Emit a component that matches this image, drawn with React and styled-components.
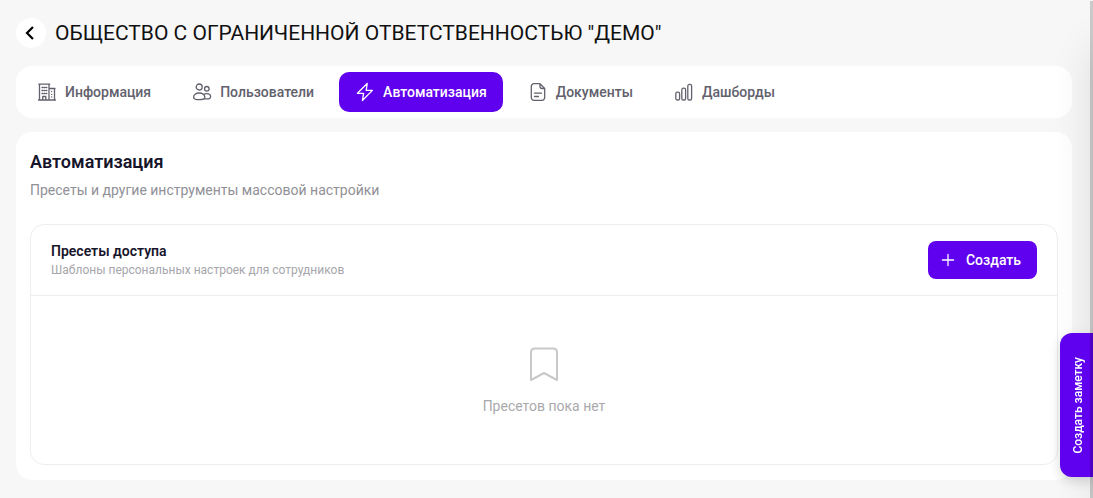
import React from 'react';
import styled, { createGlobalStyle } from 'styled-components';

const violet = '#5f00ee';
const ink = '#17152b';
const slate = '#62616d';
const line = '#eeeef0';

const GlobalStyle = createGlobalStyle`
  *, *::before, *::after {
    box-sizing: border-box;
  }

  body {
    margin: 0;
    background: #f7f7f7;
    color: ${ink};
    font-family: Roboto, Inter, "Liberation Sans", sans-serif;
    font-size: 14px;
    overflow-x: hidden;
  }

  h1, h2, h3, p {
    margin: 0;
  }

  button {
    font-family: inherit;
    border: 0;
    cursor: pointer;
  }
`;

const Page = styled.div`
  padding: 18px 21px 18px 16px;
`;

const Header = styled.header`
  display: flex;
  align-items: center;
  gap: 9px;
  margin-bottom: 18px;
`;

const BackButton = styled.button`
  display: flex;
  align-items: center;
  justify-content: center;
  width: 30px;
  height: 30px;
  padding: 0 2px 0 0;
  border-radius: 50%;
  background: white;
  color: black;
`;

const Title = styled.h1`
  color: #111;
  font-size: 21px;
  font-weight: 400;
  line-height: 30px;
`;

const Tabs = styled.nav`
  display: flex;
  gap: 9px;
  margin-bottom: 14px;
  padding: 6px 5px;
  border-radius: 16px;
  background: white;
`;

const Tab = styled.a`
  display: flex;
  align-items: center;
  gap: 8px;
  height: 40px;
  padding: 0 16px;
  border-radius: 10px;
  background: ${p => (p.$active ? violet : 'transparent')};
  color: ${p => (p.$active ? 'white' : slate)};
  font-weight: 500;
  text-decoration: none;
`;

const Panel = styled.main`
  padding: 15px 14px;
  border-radius: 16px;
  background: white;
`;

const Heading = styled.h2`
  font-size: 18px;
  font-weight: 600;
  line-height: 30px;
`;

const Lead = styled.p`
  margin-bottom: 21px;
  color: #909096;
  line-height: 26px;
`;

const Card = styled.section`
  border: 1px solid ${line};
  border-radius: 14px;
`;

const CardHead = styled.div`
  display: flex;
  align-items: center;
  justify-content: space-between;
  padding: 16px 20px;
  border-bottom: 1px solid ${line};
`;

const CardTitle = styled.h3`
  font-size: 14px;
  font-weight: 600;
  line-height: 20px;
`;

const CardNote = styled.p`
  color: #a6a6ab;
  font-size: 12px;
  line-height: 18px;
`;

const CreateButton = styled.button`
  display: flex;
  align-items: center;
  gap: 10px;
  height: 38px;
  padding: 0 16px 0 12px;
  border-radius: 8px;
  background: ${violet};
  color: white;
  font-size: 14px;
  font-weight: 500;
`;

const Empty = styled.div`
  display: flex;
  flex-direction: column;
  align-items: center;
  gap: 12px;
  padding: 48px 20px;
  color: #a9a9ad;
  line-height: 20px;
`;

const NoteButton = styled.button`
  position: fixed;
  right: 0;
  bottom: 21px;
  width: 33px;
  height: 144px;
  padding: 0 0 0 4px;
  border-radius: 12px 0 0 12px;
  background: ${violet};
  box-shadow: 0 4px 12px rgba(0, 0, 0, 0.15);
  color: white;
  font-size: 12px;
  font-weight: 500;

  span {
    display: block;
    line-height: 29px;
    writing-mode: vertical-rl;
    transform: rotate(180deg);
  }
`;

/* closed drawer, only its shadow reaches the page */
const Drawer = styled.aside`
  position: fixed;
  top: 40px;
  bottom: 0;
  left: 100%;
  width: 300px;
  box-shadow: 0 8px 40px rgba(0, 0, 0, 0.12);
`;

const ScrollTrack = styled.div`
  position: fixed;
  top: 1px;
  right: 0;
  bottom: 0;
  width: 3px;
  background: rgba(0, 0, 0, 0.18);
  pointer-events: none;
`;

const Icon = ({ size = 20, stroke = 1.3, children }) => (
  <svg
    width={size}
    height={size}
    viewBox="0 0 20 20"
    fill="none"
    stroke="currentColor"
    strokeWidth={stroke}
    strokeLinecap="round"
    strokeLinejoin="round"
    aria-hidden="true"
  >
    {children}
  </svg>
);

const BuildingIcon = () => (
  <Icon>
    <path d="M1.5 18H18.5M2.5 18V2.5M12 18V2.5M1.8 2.2H12.7M12 6.5H18M17.5 6.5V18M5.7 18V14.5H8.8V18" />
    <path d="M5 5.5H5.8M7 5.5H7.8M9 5.5H9.8M5 8.5H5.8M7 8.5H7.8M9 8.5H9.8M5 11.5H5.8M7 11.5H7.8M9 11.5H9.8M14.7 9.5V9.6M14.7 12.3V12.4M14.7 15V15.1" />
  </Icon>
);

const UsersIcon = () => (
  <Icon>
    <circle cx="7.2" cy="5" r="3" />
    <circle cx="14.8" cy="6.8" r="2.3" />
    <path d="M7.2 11C3.9 11 1.6 13 1.6 15.2C1.6 17.2 3.4 17.7 7.2 17.7S12.8 17.2 12.8 15.2C12.8 13 10.5 11 7.2 11Z" />
    <path d="M11.7 12.3C12.5 11.9 13.5 11.6 14.6 11.6C17 11.6 18.6 13 18.6 14.7C18.6 16.3 17.2 16.9 14.6 16.9H12.3" />
  </Icon>
);

const BoltIcon = () => (
  <Icon>
    <path d="M12.2 1.5L2.4 11.3H8.6L7.4 18.5L17.4 8.4H11.2Z" />
  </Icon>
);

const DocumentIcon = () => (
  <Icon>
    <path d="M12 1.7H6A2.7 2.7 0 0 0 3.3 4.4V15.6A2.7 2.7 0 0 0 6 18.3H14A2.7 2.7 0 0 0 16.7 15.6V6.5L12 1.7V4.5A2 2 0 0 0 14 6.5H16.7M6.5 11.2H13.5M6.5 14.5H10.5" />
  </Icon>
);

const ChartIcon = () => (
  <Icon>
    <rect x="1.8" y="10.2" width="3.8" height="7.8" rx="1.6" />
    <rect x="7.8" y="6.2" width="3.8" height="11.8" rx="1.6" />
    <rect x="13.8" y="2.4" width="3.8" height="15.6" rx="1.6" />
  </Icon>
);

const tabs = [
  { label: 'Информация', icon: BuildingIcon },
  { label: 'Пользователи', icon: UsersIcon },
  { label: 'Автоматизация', icon: BoltIcon, active: true },
  { label: 'Документы', icon: DocumentIcon },
  { label: 'Дашборды', icon: ChartIcon },
];

export default () => {
  return (
    <>
      <GlobalStyle />
      <Page>
        <Header>
          <BackButton aria-label="Назад">
            <svg width="10" height="14" viewBox="0 0 10 14" fill="none" stroke="currentColor" strokeWidth="2.2">
              <path d="M8 1L2 7L8 13" />
            </svg>
          </BackButton>
          <Title>ОБЩЕСТВО С ОГРАНИЧЕННОЙ ОТВЕТСТВЕННОСТЬЮ "ДЕМО"</Title>
        </Header>
        <Tabs>
          {tabs.map(({ label, icon: TabIcon, active }) => (
            <Tab key={label} href="#" $active={active} aria-current={active ? 'page' : undefined}>
              <TabIcon />
              {label}
            </Tab>
          ))}
        </Tabs>
        <Panel>
          <Heading>Автоматизация</Heading>
          <Lead>Пресеты и другие инструменты массовой настройки</Lead>
          <Card>
            <CardHead>
              <div>
                <CardTitle>Пресеты доступа</CardTitle>
                <CardNote>Шаблоны персональных настроек для сотрудников</CardNote>
              </div>
              <CreateButton>
                <Icon size={16} stroke={1.6}><path d="M10 3V17M3 10H17" /></Icon>
                Создать
              </CreateButton>
            </CardHead>
            <Empty>
              <svg width="40" height="40" viewBox="0 0 40 40" fill="none" stroke="#c9c9cb" strokeWidth="2" strokeLinejoin="round" aria-hidden="true">
                <path d="M7 36V8Q7 4.5 11 4.5H29Q33 4.5 33 8V36L20 29Z" />
              </svg>
              <p>Пресетов пока нет</p>
            </Empty>
          </Card>
        </Panel>
      </Page>
      <Drawer />
      <NoteButton><span>Создать заметку</span></NoteButton>
      <ScrollTrack />
    </>
  );
};
